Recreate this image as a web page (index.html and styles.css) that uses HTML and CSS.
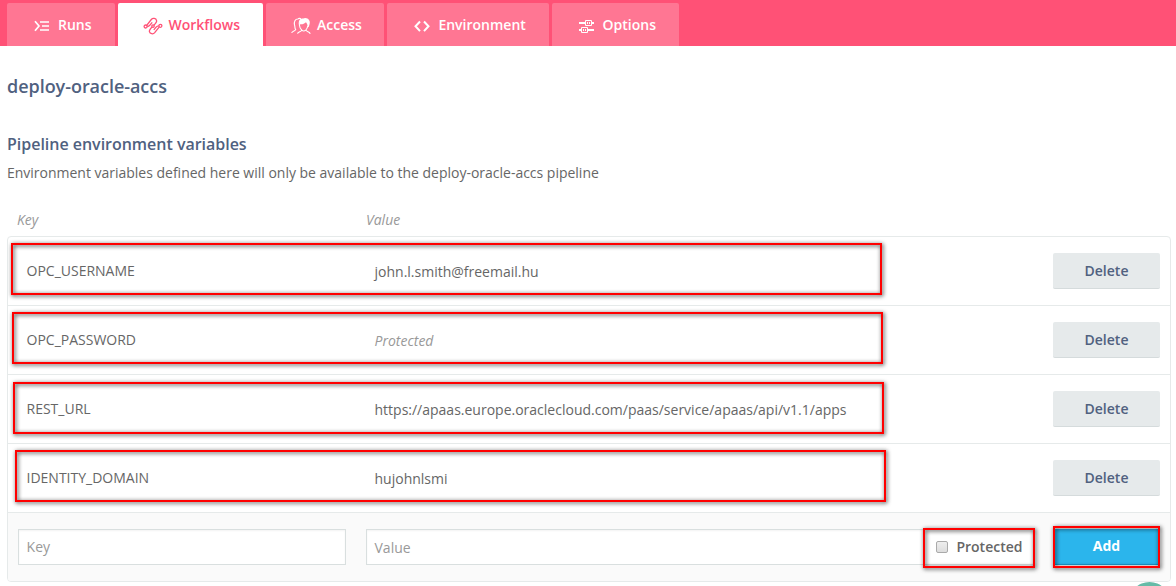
FILE: index.html
```html
<!DOCTYPE html>
<html lang="en">
<head>
<meta charset="utf-8">
<title>deploy-oracle-accs</title>
<link rel="stylesheet" href="styles.css">
</head>
<body>
<nav class="tabs">
  <a class="tab tab-runs"><svg class="icon" width="16" height="13" viewBox="0 0 16 13" fill="none" stroke="currentColor" stroke-width="1.7"><path d="M1 2.200l4 4.800-4 4.800M6 3h9M8 7h7M6 11h9"/></svg><span>Runs</span></a>
  <a class="tab tab-workflows active"><svg class="icon" width="20" height="18" viewBox="0 0 20 18" fill="none" stroke="currentColor" stroke-width="1.3"><circle cx="2.600" cy="9.500" r="1.500"/><circle cx="17.400" cy="8.800" r="1.500"/><circle cx="10" cy="9.100" r="1.200"/><path d="M3.700 8.300L8.300 2.500C9.800.7 13 1.200 13.600 3.600c.3 1.200-.2 2-2.700 4.600M9.100 10c-2.500 2.600-3 3.400-2.700 4.600.6 2.400 3.800 2.900 5.300 1.100l4.600-5.800M4.200 9.500c1.300 0 1.900-.3 2.700-1.300l2.300-2.800M15.800 8.800c-1.300 0-1.900.3-2.700 1.300l-2.300 2.800"/></svg><span>Workflows</span></a>
  <a class="tab tab-access"><svg class="icon" width="20" height="17" viewBox="0 -0.5 20 17" fill="none" stroke="currentColor" stroke-width="1.1"><path d="M.7 15.500c.2-2 3.600-2 4-3.400C3.400 10.500 4.300 9 3.500 7.500c-.6-3.300.6-6 3.400-6C7.600.6 9.500.7 10 1.500M6.500 16.200c.5-2.200 3.900-1.700 4.200-3.700-1.500-1.200-2-2.700-2.200-4.500-.5-2.500-.4-5 1.500-6.300M14.800 12.300c.3 2.200 4 1.700 4.400 4M10.700 12.600c1.300 1.200 2.800 1.200 4.100 0 1.200-1.200 1.800-2.700 2-4.300"/><path fill="currentColor" stroke="none" d="M8.600 7.500C7.700 3 9.500.8 12.200 1c1.600-1.200 5.900-.4 6.500 3 .3 1.700-.2 3.400-.9 5.200L16.600 10c.2-2-.3-3.800-1.600-5.300-1.400 1.400-3.600 2.200-5.600 2z"/></svg><span>Access</span></a>
  <a class="tab tab-environment"><svg class="icon" width="16" height="13" viewBox="0 0 16 13" fill="none" stroke="currentColor" stroke-width="2"><path d="M6 2.500L1.500 7.300 6 12.100M10 2.500l4.500 4.800-4.500 4.800"/></svg><span>Environment</span></a>
  <a class="tab tab-options"><svg class="icon" width="16" height="15" viewBox="0 0 16 15" fill="none" stroke="currentColor"><path stroke-width="2" d="M0 5h6M13 5h2M0 12h2M9 12h6"/><path d="M6.500 2.500h6v5h-6zM2.500 9.500h6v5h-6zM8.500 4v2M10.500 4v2M4.500 11v2M6.500 11v2"/></svg><span>Options</span></a>
</nav>
<main class="content">
  <h1 class="title">deploy-oracle-accs</h1>
  <h2 class="subtitle">Pipeline environment variables</h2>
  <p class="description">Environment variables defined here will only be available to the deploy-oracle-accs pipeline</p>
  <div class="columns"><span>Key</span><span>Value</span></div>
  <section class="panel">
    <div class="row"><span class="key">OPC_USERNAME</span><span class="value">john.l.smith@freemail.hu</span><button class="button">Delete</button><i class="mark mark-1"></i></div>
    <div class="row"><span class="key">OPC_PASSWORD</span><span class="value hidden-value">Protected</span><button class="button">Delete</button><i class="mark mark-2"></i></div>
    <div class="row"><span class="key">REST_URL</span><span class="value">https://apaas.europe.oraclecloud.com/paas/service/apaas/api/v1.1/apps</span><button class="button">Delete</button><i class="mark mark-3"></i></div>
    <div class="row"><span class="key">IDENTITY_DOMAIN</span><span class="value">hujohnlsmi</span><button class="button">Delete</button><i class="mark mark-4"></i></div>
    <div class="row row-add">
      <div class="field">Key</div>
      <div class="field field-value"><span class="placeholder">Value</span><label class="protect"><span class="checkbox"></span>Protected</label></div>
      <button class="button button-add">Add</button>
      <i class="mark mark-protected"></i><i class="mark mark-add"></i>
    </div>
  </section>
</main>
<div class="help"><div class="help-bubble"></div></div>
</body>
</html>
```
FILE: styles.css
```css
* { box-sizing: border-box; }
body {
  margin: 0;
  height: 586px;
  overflow: hidden;
  position: relative;
  background: #fff;
  color: #666;
  font: 14px/20px "Open Sans", sans-serif;
}
.tabs {
  display: flex;
  gap: 3px;
  height: 46px;
  padding: 3px 7px 0;
  background: #ff5176;
}
.tab {
  display: flex;
  align-items: center;
  border-radius: 2px 2px 0 0;
  background: #ff7693;
  color: #fff;
  font-weight: 600;
}
.tab span { white-space: nowrap; }
.tab.active { background: #fff; color: #ff5176; }
.icon { flex: none; margin-top: 2px; }
.tab-runs { width: 108px; padding-left: 27px; gap: 8px; }
.tab-workflows { width: 145px; padding-left: 25px; gap: 5.400px; }
.tab-access { width: 118px; padding-left: 25px; gap: 6px; }
.tab-environment { width: 162px; padding-left: 27px; gap: 8.400px; }
.tab-options { width: 127px; padding-left: 27px; gap: 7.600px; }
.content { height: 540px; padding: 27px 5px 0 7px; }
.title, .subtitle { margin: 0; color: #50617f; font-weight: 600; }
.title { font-size: 18px; line-height: 26px; letter-spacing: -.04px; }
.subtitle { margin-top: 33px; font-size: 16px; line-height: 24px; letter-spacing: -.02px; }
.description { margin: 7px 0 0; letter-spacing: -.01px; }
.columns {
  display: grid;
  grid-template-columns: 349px 1fr;
  margin-top: 27px;
  padding-left: 10px;
  color: #999;
  font-style: italic;
}
.panel {
  margin-top: 6px;
  border: 1px solid #e6eaea;
  border-radius: 4px;
  overflow: hidden;
}
.row {
  position: relative;
  display: grid;
  grid-template-columns: 328px 668px 107px;
  column-gap: 19.500px;
  align-items: center;
  height: 69px;
  padding-left: 10px;
  border-bottom: 1px solid #e6eaea;
}
.row:last-child { border-bottom: 0; height: 68px; }
.key { padding-left: 8.500px; }
.value { padding: 2px 0 0 9px; }
.hidden-value { color: #999; font-style: italic; }
.button {
  height: 36px;
  padding: 0;
  border: 0;
  border-bottom: 1px solid #d5dbdc;
  border-radius: 2px;
  background: #e6eaeb;
  color: #50617f;
  font: 600 14px/20px "Open Sans", sans-serif;
}
.button-add { padding-bottom: 2px; border-color: #1b9bd0; background: #2bb5ec; color: #fff; font-weight: 700; }
.row-add { background: #fafafa; }
.field {
  display: flex;
  align-items: center;
  height: 36px;
  padding-left: 7.600px;
  border: 1px solid #d9dfdf;
  background: #fff;
  box-shadow: inset 0 1px 2px #f3f3f3;
  color: #999;
}
.field-value { justify-content: space-between; padding: 0 10px 0 8px; }
.placeholder { padding-top: 1px; }
.protect { display: flex; align-items: center; gap: 8px; color: #666; font-weight: 600; }
.checkbox {
  width: 12px;
  height: 12px;
  border: 1px solid #aaa;
  border-radius: 2px;
  background: linear-gradient(#eee, #ddd);
}
.mark {
  position: absolute;
  width: 871px;
  height: 52px;
  border: 2px solid #f00;
  filter: drop-shadow(1px 1px 2px rgba(0, 0, 0, .85));
}
.mark-1 { left: 3px; top: 6px; }
.mark-2 { left: 4px; top: 6px; }
.mark-3 { left: 5px; top: 7px; }
.mark-4 { left: 7px; top: 6px; }
.mark-protected { left: 915px; top: 15px; width: 112px; height: 40px; }
.mark-add { left: 1045px; top: 13px; width: 107px; height: 42px; }
.help {
  position: absolute;
  left: 1129px;
  top: 582px;
  width: 41px;
  height: 4px;
  overflow: hidden;
}
.help-bubble {
  height: 41px;
  border-radius: 50%;
  background: #66bba7;
}
```
